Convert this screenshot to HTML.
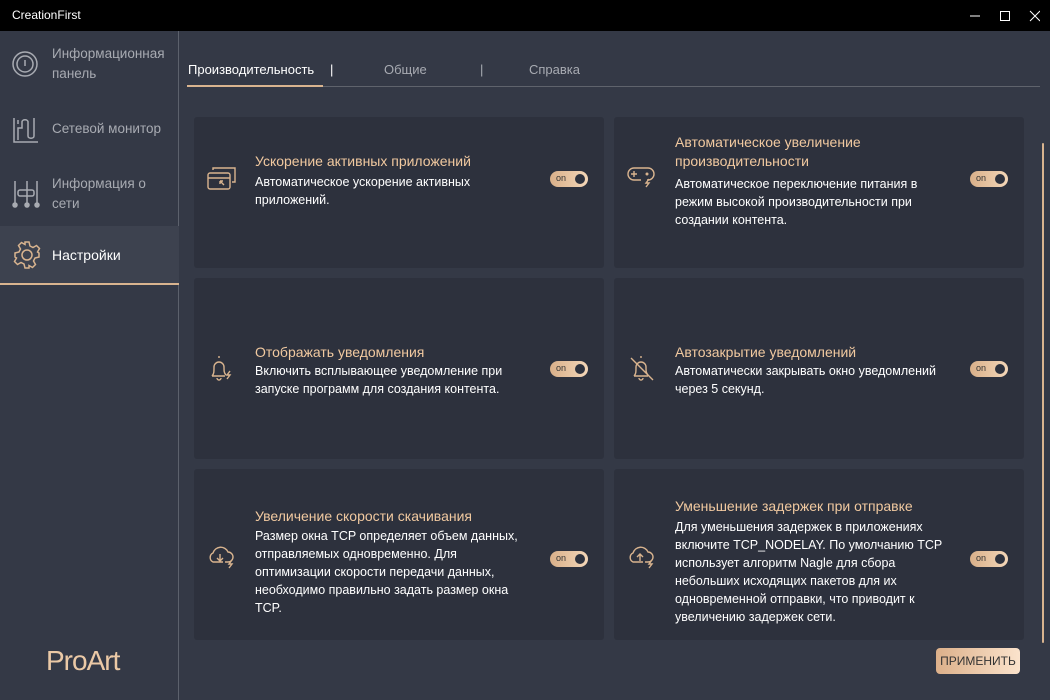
<!DOCTYPE html>
<html><head><meta charset="utf-8"><style>
*{margin:0;padding:0;box-sizing:border-box}
body{width:1050px;height:700px;background:#343946;font-family:"Liberation Sans",sans-serif;position:relative;overflow:hidden;color:#fff}
.tb{position:absolute;left:0;top:0;width:1050px;height:31px;background:#000}
.tb .t{position:absolute;left:12px;top:8px;font-size:12px;color:#fff}
.side{position:absolute;left:0;top:31px;width:179px;height:669px;background:#343946;border-right:1px solid #5c616c}
.nav{position:absolute;left:0;width:179px;color:#a8abb2;font-size:13.5px;line-height:20px}
.nav .l{position:absolute;left:52px}
.nav svg{position:absolute;left:12px}
.act{background:#3d424f;border-bottom:2px solid #d9b48f}
.tab{position:absolute;top:62px;font-size:13px;color:#a8abb2}
.card{position:absolute;background:#2d313d;border-radius:3px}
.ti{position:absolute;font-size:14px;color:#f1c9a0;line-height:19px}
.de{position:absolute;font-size:12.5px;color:#fff;line-height:18px;width:290px}
.tg{position:absolute;width:38px;height:16px;border-radius:8px;background:linear-gradient(90deg,#d9b08a,#f3d6b8)}
.tg span{position:absolute;left:6px;top:2px;font-size:9px;line-height:11px;color:#333}
.tg i{position:absolute;right:3px;top:3px;width:10px;height:10px;border-radius:5px;background:#2d313d}
.ic{position:absolute;stroke:#d9b48f;fill:none;stroke-width:1.4}
</style></head><body>
<div class="tb"><div class="t">CreationFirst</div>
<svg style="position:absolute;left:960px;top:8px" width="80" height="16" stroke="#fff" fill="none" stroke-width="1"><path d="M10 8h10"/><rect x="40.5" y="3.5" width="9" height="9"/><path d="M70 3l10 10M80 3L70 13"/></svg></div>
<div class="side">
<div class="nav" style="top:13px;height:50px"><svg width="28" height="28" style="top:6px" stroke="#a8abb2" fill="none" stroke-width="1.5"><circle cx="13" cy="14" r="12"/><circle cx="13" cy="14" r="8"/><path d="M13 10v6"/></svg><div class="l">Информационная<br>панель</div></div>
<div class="nav" style="top:88px;height:24px"><svg width="28" height="28" style="top:-3px" stroke="#a8abb2" fill="none" stroke-width="1.5"><path d="M2 2v24h24M6 8v-4M6 24V12h4v-6c0-3 6-3 6 0v14c0 3 6 3 6 0V2"/></svg><div class="l">Сетевой монитор</div></div>
<div class="nav" style="top:143px;height:44px"><svg width="28" height="30" style="top:5px" stroke="#a8abb2" fill="#a8abb2" stroke-width="1.5"><path d="M3 2v24M15 2v24M25 2v24" fill="none"/><rect x="6" y="11" width="16" height="6" rx="2" fill="none"/><circle cx="3" cy="26" r="2"/><circle cx="15" cy="26" r="2"/><circle cx="25" cy="26" r="2"/></svg><div class="l">Информация о<br>сети</div></div>
<div class="nav act" style="top:195px;height:59px;color:#fff"><svg width="30" height="30" style="top:14px" viewBox="0 0 30 30" stroke="#d9b48f" fill="none" stroke-width="1.5"><circle cx="15" cy="15" r="5"/><path d="M13 2h4l1 4 3 1.5 3.5-2 3 3-2 3.5L27 13v4l-4 1-1.5 3 2 3.5-3 3-3.5-2L17 28h-4l-1-4-3-1.5-3.5 2-3-3 2-3.5L3 17v-4l4-1 1.5-3-2-3.5 3-3 3.5 2z"/></svg><div class="l" style="top:19px;font-size:14px">Настройки</div></div>
<div style="position:absolute;left:46px;top:614px;font-size:28px;letter-spacing:-1px;color:#ebc9a6">ProArt</div>
</div>
<div class="tab" style="left:188px;color:#fff">Производительность</div>
<div class="tab" style="left:330px;color:#fff">|</div>
<div class="tab" style="left:384px">Общие</div>
<div class="tab" style="left:480px">|</div>
<div class="tab" style="left:529px">Справка</div>
<div style="position:absolute;left:187px;top:86px;width:853px;height:1px;background:#5f636c"></div>
<div style="position:absolute;left:187px;top:85px;width:136px;height:2px;background:#d9b48f"></div>
<div style="position:absolute;left:1042px;top:143px;width:2px;height:500px;background:#d9b48f;border-radius:1px"></div>

<div class="card" style="left:194px;top:117px;width:410px;height:151px"></div>
<div class="card" style="left:614px;top:117px;width:410px;height:151px"></div>
<div class="card" style="left:194px;top:278px;width:410px;height:181px"></div>
<div class="card" style="left:614px;top:278px;width:410px;height:181px"></div>
<div class="card" style="left:194px;top:469px;width:410px;height:171px"></div>
<div class="card" style="left:614px;top:469px;width:410px;height:171px"></div>

<svg class="ic" style="left:207px;top:166px" width="30" height="26"><rect x="1" y="7" width="22" height="16" rx="2"/><path d="M6 4V2h22v14h-3M1 12h22M17 19l-4-4M13 15v3M13 15h3"/></svg>
<div class="ti" style="left:255px;top:152px">Ускорение активных приложений</div>
<div class="de" style="left:255px;top:173px">Автоматическое ускорение активных приложений.</div>
<div class="tg" style="left:550px;top:171px"><span>on</span><i></i></div>

<svg class="ic" style="left:627px;top:165px" width="30" height="26"><path d="M7 3h14a6 6 0 0 1 0 12h-1M14 15H7A6 6 0 0 1 7 3M4 9h6M7 6v6"/><circle cx="20" cy="9" r=".8"/><path d="M22 14l-3 4h3l-3 4"/></svg>
<div class="ti" style="left:675px;top:133px;width:300px">Автоматическое увеличение производительности</div>
<div class="de" style="left:675px;top:175px;width:270px">Автоматическое переключение питания в режим высокой производительности при создании контента.</div>
<div class="tg" style="left:970px;top:171px"><span>on</span><i></i></div>

<svg class="ic" style="left:208px;top:354px" width="28" height="30"><path d="M11 2v2M4 22h13M4 22c2-2 2-4 2-9a5 5 0 0 1 10 0c0 4 0 6 2 8M9 24a2 2 0 0 0 4 0M22 17l-3 4h3l-3 4"/></svg>
<div class="ti" style="left:255px;top:343px">Отображать уведомления</div>
<div class="de" style="left:255px;top:362px">Включить всплывающее уведомление при запуске программ для создания контента.</div>
<div class="tg" style="left:550px;top:361px"><span>on</span><i></i></div>

<svg class="ic" style="left:628px;top:354px" width="28" height="30"><path d="M13 2v2M6 22h14M6 22c2-2 2-4 2-9a5 5 0 0 1 10 0c0 4 0 6 2 8M11 24a2 2 0 0 0 4 0M3 4l22 22"/></svg>
<div class="ti" style="left:675px;top:343px">Автозакрытие уведомлений</div>
<div class="de" style="left:675px;top:362px">Автоматически закрывать окно уведомлений через 5 секунд.</div>
<div class="tg" style="left:970px;top:361px"><span>on</span><i></i></div>

<svg class="ic" style="left:207px;top:545px" width="30" height="26"><path d="M18 17h3a5 5 0 0 0 0-10 8 8 0 0 0-15 1 5 5 0 0 0 0 9h10M13 9v7M10 13l3 3 3-3M25 15l-3 4h3l-3 4"/></svg>
<div class="ti" style="left:255px;top:507px">Увеличение скорости скачивания</div>
<div class="de" style="left:255px;top:527px;width:268px">Размер окна TCP определяет объем данных, отправляемых одновременно. Для оптимизации скорости передачи данных, необходимо правильно задать размер окна TCP.</div>
<div class="tg" style="left:550px;top:551px"><span>on</span><i></i></div>

<svg class="ic" style="left:627px;top:545px" width="30" height="26"><path d="M18 17h3a5 5 0 0 0 0-10 8 8 0 0 0-15 1 5 5 0 0 0 0 9h10M13 16V9M10 12l3-3 3 3M25 15l-3 4h3l-3 4"/></svg>
<div class="ti" style="left:675px;top:497px">Уменьшение задержек при отправке</div>
<div class="de" style="left:675px;top:518px;width:285px">Для уменьшения задержек в приложениях включите TCP_NODELAY. По умолчанию TCP использует алгоритм Nagle для сбора небольших исходящих пакетов для их одновременной отправки, что приводит к увеличению задержек сети.</div>
<div class="tg" style="left:970px;top:551px"><span>on</span><i></i></div>

<div style="position:absolute;left:936px;top:648px;width:84px;height:26px;border-radius:4px;background:linear-gradient(90deg,#dcb08a,#fbe3cc);color:#333;font-size:12px;text-align:center;line-height:26px">ПРИМЕНИТЬ</div>
</body></html>
